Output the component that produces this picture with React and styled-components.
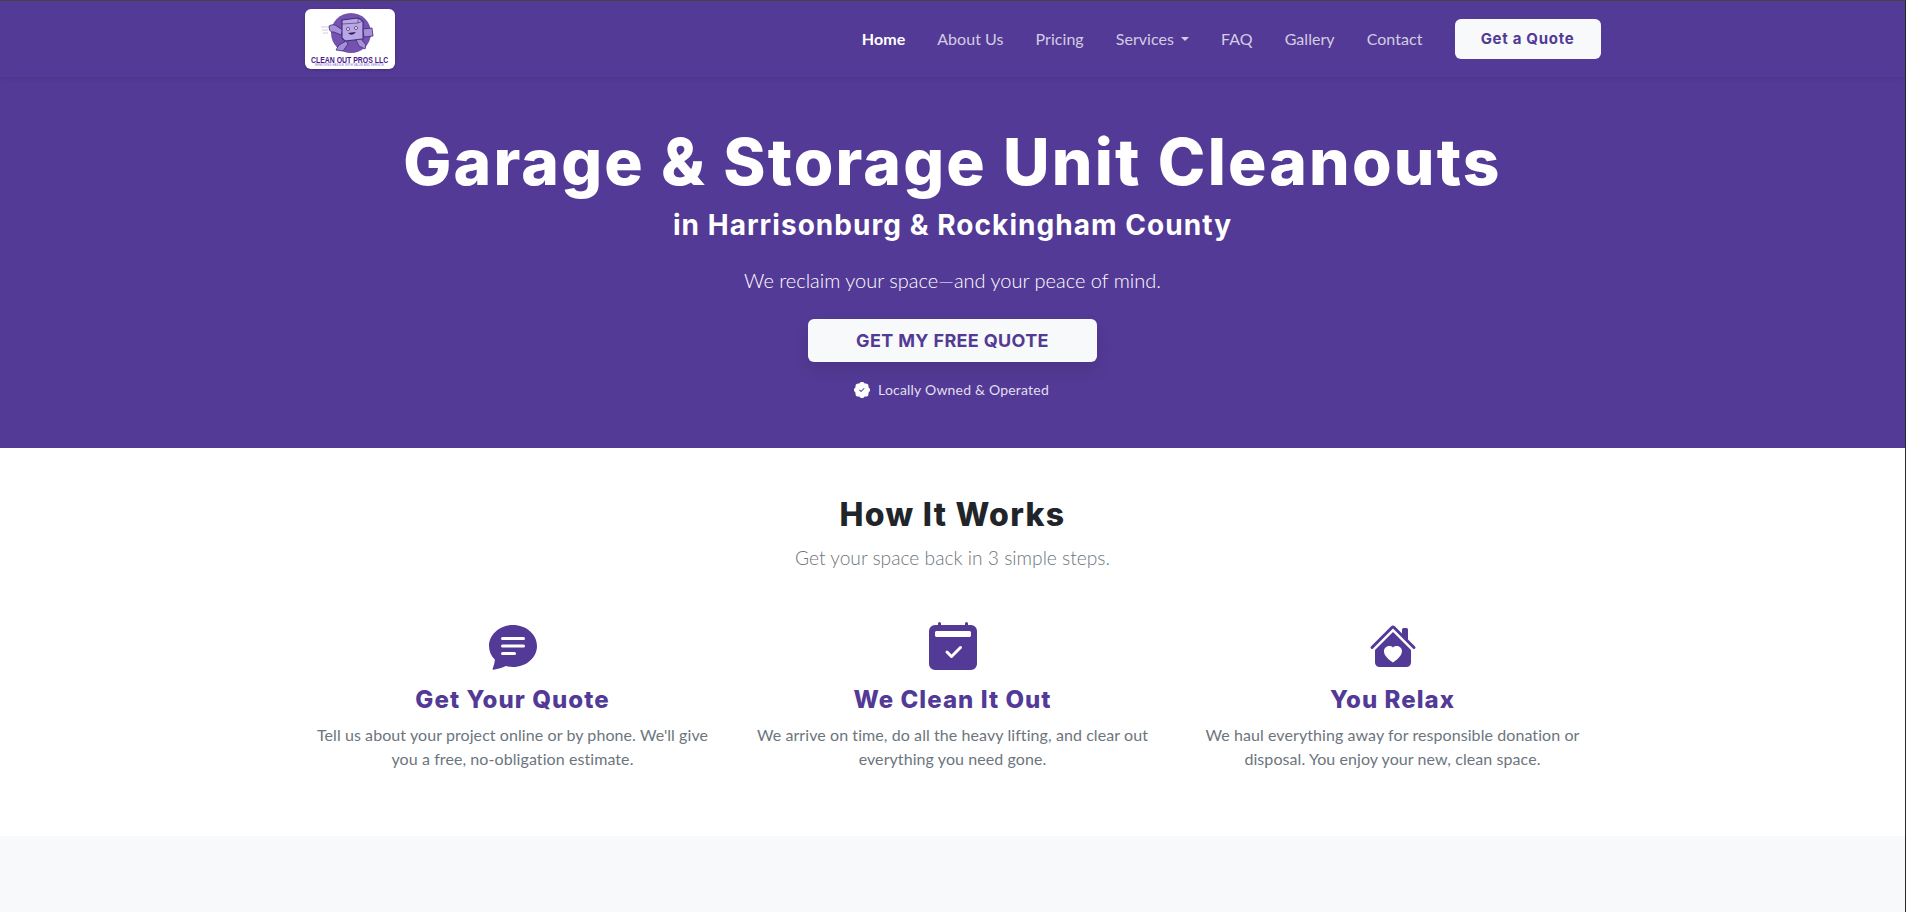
import React from "react";
import styled, { createGlobalStyle } from "styled-components";
import { BsChatTextFill, BsCalendar2CheckFill, BsHouseHeartFill, BsPatchCheckFill } from "react-icons/bs";

const PURPLE = "#533a96";
const HEAD = '"Inter", "Liberation Sans", sans-serif';
const BODY = '"Lato", "Liberation Sans", sans-serif';

const Global = createGlobalStyle`
  * { box-sizing: border-box; }
  html, body { margin: 0; padding: 0; background: #fff; }
  body { font-family: ${BODY}; color: #212529; overflow: hidden; height: 912px; }
`;
const Page = styled.div`display:flex;flex-direction:column;height:912px;border-right:1px solid #2b2b2b;`;
const Header = styled.header`
  background:${PURPLE};height:77px;border-top:1px solid #444;box-shadow:0 2px 4px rgba(0,0,0,.07);position:relative;
`;
const Container = styled.div`width:1320px;margin:0 auto;padding:0 12px;`;
const NavRow = styled(Container)`display:flex;align-items:center;justify-content:space-between;height:76px;`;
const LogoCard = styled.div`
  width:90px;height:60px;background:#fff;border-radius:6px;display:flex;flex-direction:column;align-items:center;
  padding-top:3px;box-shadow:0 1px 3px rgba(0,0,0,.2);
`;
const LogoCaption = styled.span`font:800 9.6px/9px "Liberation Sans",sans-serif;color:#4a1a8c;white-space:nowrap;transform:scaleX(.72);margin-top:1px;`;
const LogoTiny = styled.span`font:400 3px/3px "Liberation Sans",sans-serif;color:#8a6fc4;white-space:nowrap;`;
const Nav = styled.nav`display:flex;align-items:center;`;
const NavLink = styled.a`
  font:${p=>p.$active?700:400} 16px/24px ${BODY};letter-spacing:.05px;color:${p=>p.$active?"#fff":"rgba(255,255,255,.75)"};
  padding:0 16px;display:flex;align-items:center;gap:7px;
`;
const Caret = styled.i`display:block;width:0;height:0;border-top:4px solid currentColor;border-left:4px solid transparent;border-right:4px solid transparent;`;
const QuoteBtn = styled.a`
  margin-left:16px;width:146px;height:40px;background:#f8f9fa;border-radius:6px;display:flex;align-items:center;justify-content:center;
  font:700 15px/1 ${HEAD};letter-spacing:.7px;color:${PURPLE};padding-bottom:1px;
`;
const Hero = styled.section`background:${PURPLE};height:371px;display:flex;flex-direction:column;align-items:center;color:#fff;padding-top:53px;`;
const H1 = styled.h1`margin:0;font:800 64px/1 ${HEAD};letter-spacing:2.2px;white-space:nowrap;`;
const H2 = styled.h2`margin:13px 0 0;font:700 28px/36px ${HEAD};letter-spacing:1.05px;white-space:nowrap;`;
const Lead = styled.p`margin:22px 0 0;font:300 20px/30px ${BODY};white-space:nowrap;`;
const CTA = styled.a`
  margin-top:24px;width:289px;height:43px;background:#f8f9fa;border-radius:6px;display:flex;align-items:center;justify-content:center;
  font:700 18px/1 ${HEAD};letter-spacing:.35px;color:${PURPLE};box-shadow:0 8px 16px rgba(0,0,0,.1);
`;
const Badge = styled.div`margin-top:17px;margin-left:-2px;display:flex;align-items:center;gap:8px;font:400 14px/21px ${BODY};letter-spacing:.2px;color:rgba(255,255,255,.85);`;
const Steps = styled.section`height:388px;padding-top:47px;text-align:center;`;
const H3 = styled.h3`margin:0;font:800 32px/40px ${HEAD};letter-spacing:1.3px;color:#212529;`;
const Sub = styled.p`margin:8px 0 0;font:300 19.2px/30px ${BODY};color:#6c757d;`;
const Grid = styled.div`width:1320px;margin:49px auto 0;display:grid;grid-template-columns:repeat(3,1fr);`;
const Step = styled.div`padding:0 12px;display:flex;flex-direction:column;align-items:center;color:${PURPLE};`;
const StepTitle = styled.h4`margin:15px 0 0;font:800 24px/30px ${HEAD};letter-spacing:1.05px;color:${PURPLE};`;
const StepText = styled.p`margin:8px 0 0;font:400 16px/24px ${BODY};letter-spacing:.08px;color:#6c757d;`;
const Band = styled.section`flex:1;background:#f8f9fa;`;

const steps = [
  [BsChatTextFill, "Get Your Quote", <>Tell us about your project online or by phone. We'll give<br/>you a free, no-obligation estimate.</>],
  [BsCalendar2CheckFill, "We Clean It Out", <>We arrive on time, do all the heavy lifting, and clear out<br/>everything you need gone.</>],
  [BsHouseHeartFill, "You Relax", <>We haul everything away for responsible donation or<br/>disposal. You enjoy your new, clean space.</>],
];

export default function App() {
  return (
    <Page>
      <Global />
      <Header>
        <NavRow>
          <LogoCard>
            <svg width="60" height="42" viewBox="0 0 60 42" aria-hidden="true">
              <circle cx="31" cy="21" r="20" fill="#7452b0" />
              <path d="M1 15h7M2 18h6M3 21h5" stroke="#c9bcdf" strokeWidth=".8" />
              <path d="M9 14q5 -3 9 1l5 3 -2 5 -7 -3q-5 1 -5 -6z" fill="#a58fd6" stroke="#3f2a78" strokeWidth=".8" />
              <path d="M22 8l16 -2 5 3 0 18 -18 2 -3 -3z" fill="#b9a6e3" stroke="#3f2a78" strokeWidth="1.1" />
              <path d="M38 6l0 5 5 -2M38 11l-16 1" stroke="#3f2a78" strokeWidth=".6" fill="none" />
              <circle cx="28" cy="17" r="1.5" fill="#fff" stroke="#2c1a5a" strokeWidth=".7" />
              <circle cx="36" cy="16" r="1.5" fill="#fff" stroke="#2c1a5a" strokeWidth=".7" />
              <path d="M28 21q4 4 8 -1z" fill="#2c1a5a" />
              <path d="M43 17l9 -1 1 8 -9 1z" fill="#a58fd6" stroke="#3f2a78" strokeWidth=".8" />
              <path d="M26 29l-7 4 -3 5 7 1 5 -7zM36 28l3 6 6 3 1 -4 -5 -6z" fill="#a58fd6" stroke="#3f2a78" strokeWidth=".8" />
            </svg>
            <LogoCaption>CLEAN OUT PROS LLC</LogoCaption>
            <LogoTiny>REMOVING HASSLE WITH VALUE AND SERVICE</LogoTiny>
          </LogoCard>
          <Nav>
            <NavLink $active>Home</NavLink>
            <NavLink>About Us</NavLink>
            <NavLink>Pricing</NavLink>
            <NavLink>Services <Caret /></NavLink>
            <NavLink>FAQ</NavLink>
            <NavLink>Gallery</NavLink>
            <NavLink>Contact</NavLink>
            <QuoteBtn>Get a Quote</QuoteBtn>
          </Nav>
        </NavRow>
      </Header>
      <Hero>
        <H1>Garage &amp; Storage Unit Cleanouts</H1>
        <H2>in Harrisonburg &amp; Rockingham County</H2>
        <Lead>We reclaim your space—and your peace of mind.</Lead>
        <CTA>GET MY FREE QUOTE</CTA>
        <Badge><BsPatchCheckFill size={16} color="#fff" />Locally Owned &amp; Operated</Badge>
      </Hero>
      <Steps>
        <H3>How It Works</H3>
        <Sub>Get your space back in 3 simple steps.</Sub>
        <Grid>
          {steps.map(([Icon, title, text]) => (
            <Step key={title}>
              <Icon size={48} />
              <StepTitle>{title}</StepTitle>
              <StepText>{text}</StepText>
            </Step>
          ))}
        </Grid>
      </Steps>
      <Band />
    </Page>
  );
}
